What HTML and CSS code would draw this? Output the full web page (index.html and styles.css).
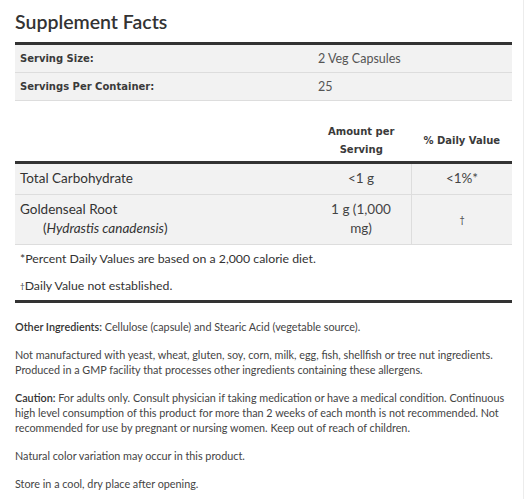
FILE: index.html
```html
<!DOCTYPE html>
<html>
<head>
<meta charset="utf-8">
<link rel="stylesheet" href="styles.css">
</head>
<body>
<div class="page">
  <h2 class="title">Supplement Facts</h2>
  <table class="facts serving">
    <tr><td class="lbl">Serving Size:</td><td class="val">2 Veg Capsules</td></tr>
    <tr><td class="lbl">Servings Per Container:</td><td class="val">25</td></tr>
  </table>
  <table class="facts nutr">
    <thead>
      <tr><th class="name"></th><th class="amt">Amount per<br>Serving</th><th class="dv">% Daily Value</th></tr>
    </thead>
    <tbody>
      <tr><td class="name">Total Carbohydrate</td><td class="amt">&lt;1 g</td><td class="dv">&lt;1%*</td></tr>
      <tr><td class="name">Goldenseal Root<br><span class="sub">(<i>Hydrastis canadensis</i>)</span></td><td class="amt">1 g (1,000<br>mg)</td><td class="dv"><span class="dag">†</span></td></tr>
    </tbody>
  </table>
  <div class="notes">
    <p>*Percent Daily Values are based on a 2,000 calorie diet.</p>
    <p><span class="dagsm">†</span>Daily Value not established.</p>
  </div>
  <div class="info">
    <p><b>Other Ingredients:</b> Cellulose (capsule) and Stearic Acid (vegetable source).</p>
    <p>Not manufactured with yeast, wheat, gluten, soy, corn, milk, egg, fish, shellfish or tree nut ingredients. Produced in a GMP facility that processes other ingredients containing these allergens.</p>
    <p><b>Caution:</b> For adults only. Consult physician if taking medication or have a medical condition. Continuous high level consumption of this product for more than 2 weeks of each month is not recommended. Not recommended for use by pregnant or nursing women. Keep out of reach of children.</p>
    <p>Natural color variation may occur in this product.</p>
    <p>Store in a cool, dry place after opening.</p>
  </div>
</div>
</body>
</html>
```
FILE: styles.css
```css
html, body { margin: 0; padding: 0; background: #fff; }
body { font-family: Lato, "Open Sans", sans-serif; color: #333; }
.page {
  width: 524px;
  min-height: 499px;
  box-sizing: border-box;
  border-right: 1px solid #ececec;
  padding: 9px 0 0 15px;
}
.title {
  margin: 0 0 7px;
  font-size: 19.5px;
  font-weight: 600;
  line-height: 26px;
  color: #333;
}
.facts {
  width: 497px;
  border-collapse: collapse;
  border-top: 3px solid #333;
}
.serving td {
  background: #f2f2f2;
  border-bottom: 1px solid #ddd;
  height: 27px;
  padding: 0 5px;
}
.serving .lbl {
  width: 288px;
  font-family: "DejaVu Sans", Verdana, sans-serif;
  font-size: 10px;
  font-weight: 700;
  color: #3a3a3a;
}
.serving .val { font-size: 12.5px; color: #555; }
.nutr { margin-top: 18px; border-top: none; }
.nutr thead th {
  font-family: "DejaVu Sans", Verdana, sans-serif;
  font-size: 10px;
  font-weight: 700;
  color: #3a3a3a;
  line-height: 18px;
  padding: 4px 0 2px;
  border-bottom: 3px solid #333;
}
.nutr .amt, .nutr .dv { width: 90px; text-align: center; }
.nutr tbody td {
  background: #f2f2f2;
  border-bottom: 1px solid #ddd;
  font-size: 13.5px;
  line-height: 19px;
  padding: 5px 5px 6px;
}
.nutr tbody td.amt, .nutr tbody td.dv { color: #444; }
.nutr tbody td.dv { border-left: 1px solid #ddd; }
.sub { padding-left: 23px; }
.dag { font-size: 9px; }
.dagsm { font-size: 8px; vertical-align: 1px; }
.notes {
  width: 497px;
  border-bottom: 3px solid #333;
  font-size: 12.3px;
  padding: 0 0 0 5px;
  box-sizing: border-box;
}
.notes p { margin: 0; line-height: 27px; }
.info {
  width: 497px;
  font-size: 10.8px;
  line-height: 15px;
  color: #444;
  padding-top: 16px;
}
.info p { margin: 0 0 13px; }
.info b { font-weight: 600; color: #333; }
```
